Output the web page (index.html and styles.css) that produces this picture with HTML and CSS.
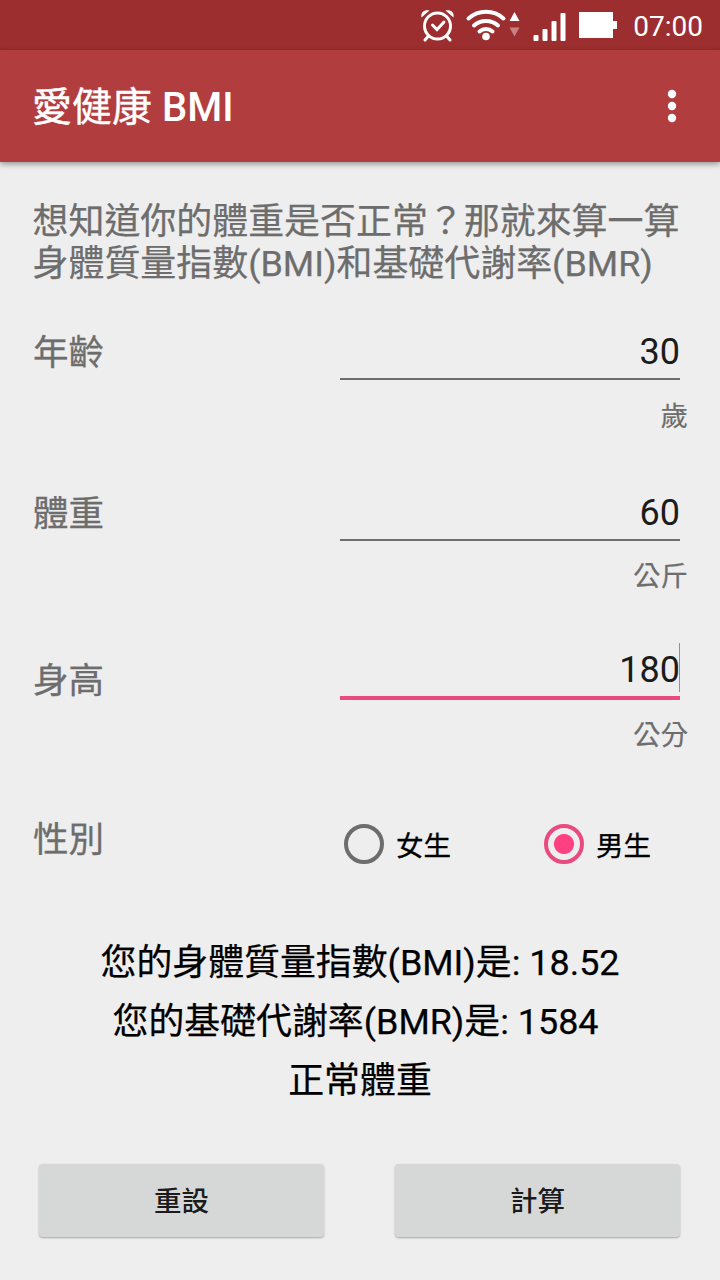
FILE: index.html
```html
<!DOCTYPE html>
<html lang="zh-Hant">
<head>
<meta charset="utf-8">
<title>愛健康 BMI</title>
<link rel="stylesheet" href="styles.css">
</head>
<body>
<div class="screen">
  <header class="status">
    <svg class="status-icons" width="210" height="50" viewBox="0 0 210 50" fill="none" stroke="#fff">
      <g stroke-width="3" stroke-linecap="round">
        <circle cx="27.500" cy="26" r="13"/>
        <path d="M18.500 36l-3.500 4M36.500 36l3.500 4"/>
        <path d="M22.500 25l4.500 4.500 7-7.500"/>
        <path d="M11.500 17.500C10.500 12 14.500 9.500 19.500 10.500zM43.500 17.500C44.500 12 40.500 9.500 35.500 10.500z" fill="#fff" stroke="none"/>
      </g>
      <g stroke-width="4" stroke-linecap="round">
        <path d="M58.500 18.500a26 26 0 0 1 35 0M64 25.500a18 18 0 0 1 24 0M69.500 31.500a10 10 0 0 1 13 0"/>
      </g>
      <circle cx="76" cy="36.500" r="3.800" fill="#fff" stroke="none"/>
      <path d="M99.500 21l5-9 5 9z" fill="#fff" stroke="none"/>
      <path d="M99.500 27.500l5 9 5-9z" fill="#c98080" stroke="none"/>
      <g fill="#fff" stroke="none">
        <rect x="123.500" y="35" width="5" height="6" rx="1"/>
        <rect x="132.500" y="29" width="5" height="12" rx="1"/>
        <rect x="141.500" y="21" width="5" height="20" rx="1"/>
        <rect x="150.500" y="13" width="5" height="28" rx="1"/>
        <path d="M169 12h34v9h4v8h-4v9h-34z"/>
      </g>
    </svg>
    <span class="clock">07:00</span>
  </header>
  <div class="appbar">
    <h1 class="title">愛健康 <span class="title-latin">BMI</span></h1>
    <svg class="more" width="12" height="36" viewBox="0 0 12 36" fill="#fff"><circle cx="6" cy="6" r="4.200"/><circle cx="6" cy="18" r="4.200"/><circle cx="6" cy="30" r="4.200"/></svg>
  </div>
  <main class="content">
    <p class="intro">想知道你的體重是否正常？那就來算一算<br>身體質量指數(BMI)和基礎代謝率(BMR)</p>
    <section class="row age"><label class="label">年齡</label><div class="field"><div class="input">30</div><div class="unit">歲</div></div></section>
    <section class="row weight"><label class="label">體重</label><div class="field"><div class="input">60</div><div class="unit">公斤</div></div></section>
    <section class="row height"><label class="label">身高</label><div class="field"><div class="input focused">180<i class="caret"></i></div><div class="unit">公分</div></div></section>
    <section class="row gender"><span class="label">性別</span>
      <div class="radios">
        <div class="radio"><span class="ring"></span><span class="radio-text">女生</span></div>
        <div class="radio"><span class="ring checked"></span><span class="radio-text">男生</span></div>
      </div>
    </section>
    <section class="results">
      <p class="result">您的身體質量指數(BMI)是: 18.52</p>
      <p class="result second">您的基礎代謝率(BMR)是: 1584</p>
      <p class="result">正常體重</p>
    </section>
    <div class="actions"><button class="btn">重設</button><button class="btn">計算</button></div>
  </main>
</div>
</body>
</html>
```
FILE: styles.css
```css
* { box-sizing: border-box; }
body { margin: 0; }
.screen { width: 720px; height: 1280px; overflow: hidden; display: flex; flex-direction: column; background: #eee; font-family: Roboto, "Noto Sans CJK TC", sans-serif; color: #1b1b1b; }
.status { height: 50px; flex: none; background: #9c2e2f; display: flex; justify-content: flex-end; color: #fff; padding-right: 17px; }
.status-icons { margin-right: 13px; }
.clock { font-size: 28px; line-height: 54px; }
.appbar { height: 112px; flex: none; background: #b23d3f; display: flex; align-items: center; justify-content: space-between; padding: 0 42px 0 32px; box-shadow: 0 2px 6px rgba(0,0,0,.4); }
.title { margin: 0; padding-top: 4px; color: #fff; font-size: 40px; line-height: 56px; font-weight: 400; -webkit-text-stroke: .4px; }
.title-latin { font-weight: 500; -webkit-text-stroke: 0; }
.content { display: flex; flex-direction: column; }
.intro { margin: 39px 0 0 32.5px; color: #6d6d6d; font-size: 35.95px; line-height: 42px; white-space: nowrap; -webkit-text-stroke: .25px; }
.row { display: grid; grid-template-columns: 307px 1fr; padding-left: 33px; flex: none; }
.age { margin-top: 43px; height: 161px; }
.weight { height: 157px; }
.height { height: 170px; }
.label { font-size: 35.5px; line-height: 42px; color: #6d6d6d; padding-top: 4px; -webkit-text-stroke: .3px; }
.height .label { padding-top: 14px; }
.gender .label { padding-top: 3px; }
.field { padding-right: 32px; }
.input { position: relative; width: 340px; height: 52px; font-size: 36px; line-height: 48px; text-align: right; border-bottom: 2px solid #6d6d6d; }
.focused { border-bottom: 4px solid #e94b80; height: 54px; }
.caret { position: absolute; right: 0; top: -3px; width: 1px; height: 49px; background: #f06292; }
.unit { color: #6d6d6d; font-size: 27.5px; line-height: 36px; text-align: right; margin-top: 18px; -webkit-text-stroke: .2px; }
.age .unit { margin-top: 19px; }
.gender { height: 84px; }
.radios { display: grid; grid-template-columns: 200px 1fr; padding: 8px 0 0 4px; align-items: start; }
.radio { display: flex; align-items: flex-start; gap: 12px; font-size: 27.5px; line-height: 40px; color: #000; -webkit-text-stroke: .3px; }
.radio-text { padding-top: 3px; }
.ring { width: 40px; height: 40px; border: 4px solid #6d6d6d; border-radius: 50%; }
.checked { border-color: #e94b80; background: radial-gradient(circle, #ff4081 9.5px, transparent 10.5px); }
.results { margin-top: 34px; text-align: center; color: #000; }
.result { margin: 0; font-size: 35.9px; line-height: 59px; -webkit-text-stroke: .25px; }
.second { padding-right: 9px; }
.actions { display: grid; grid-template-columns: 285px 285px; gap: 71px; margin: 53px 0 0 39px; }
.btn { height: 73px; border: 0; border-radius: 4px; background: #d6d8d7; box-shadow: 0 1px 2px rgba(0,0,0,.3); font: 500 27.5px/40px Roboto, "Noto Sans CJK TC", sans-serif; color: #1b1b1b; padding: 3px 0 0; }
```
